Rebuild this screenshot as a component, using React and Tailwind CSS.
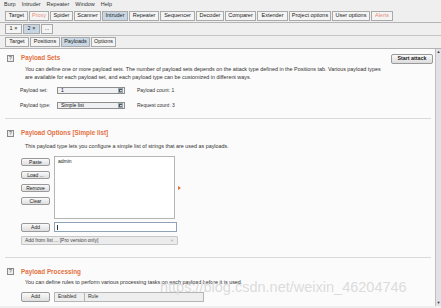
import React from 'react';

const mainTabs = [
  { label: 'Target', w: 'w-[23px]' },
  { label: 'Proxy', w: 'w-[20px]', dim: true },
  { label: 'Spider', w: 'w-[23px]' },
  { label: 'Scanner', w: 'w-[27px]' },
  { label: 'Intruder', w: 'w-[26px]', active: true },
  { label: 'Repeater', w: 'w-[30px]' },
  { label: 'Sequencer', w: 'w-[35px]' },
  { label: 'Decoder', w: 'w-[28px]' },
  { label: 'Comparer', w: 'w-[31px]' },
  { label: 'Extender', w: 'w-[31px]' },
  { label: 'Project options', w: 'w-[42px]' },
  { label: 'User options', w: 'w-[38px]' },
  { label: 'Alerts', w: 'w-[22px]', dim: true },
];

const subTabs = [
  { label: 'Target', w: 'w-[24px]' },
  { label: 'Positions', w: 'w-[30px]' },
  { label: 'Payloads', w: 'w-[29px]', active: true },
  { label: 'Options', w: 'w-[25px]' },
];

function Tab({ label, w, active, dim }) {
  return (
    <div
      className={`${w} h-[10px] shrink-0 flex items-center justify-center border border-[#a9a9a9] text-[5.5px] leading-none ${
        active ? 'bg-[#c9d7e5]' : 'bg-[#f4f4f4]'
      } ${dim ? 'text-[#e98a7a]' : 'text-[#222]'}`}
    >
      {label}
    </div>
  );
}

function Help() {
  return (
    <div className="w-[7px] h-[7px] shrink-0 border border-[#8a8a8a] bg-[#eeeeee] text-[5px] leading-none flex items-center justify-center text-[#444]">
      ?
    </div>
  );
}

function Heading({ children }) {
  return (
    <div className="flex items-center gap-[7px] pl-[7px]">
      <Help />
      <span className="text-[6.3px] font-semibold text-[#e3703d] leading-none">{children}</span>
    </div>
  );
}

function Btn({ children, className = '' }) {
  return (
    <div
      className={`w-[29px] h-[8px] rounded-[2px] border border-[#9a9a9a] bg-gradient-to-b from-[#fafafa] to-[#dedede] text-[5px] leading-none flex items-center justify-center text-[#222] ${className}`}
    >
      {children}
    </div>
  );
}

function Select({ value }) {
  return (
    <div className="w-[68px] h-[7px] border border-[#8e8e8e] bg-[#eef0f3] flex items-center justify-between">
      <span className="pl-[3px] text-[5px] leading-none text-[#111]">{value}</span>
      <span className="w-[5px] h-[5px] mr-[1px] bg-[#4d5560] border border-[#9aa] flex items-center justify-center">
        <span className="w-0 h-0 border-l-[1.5px] border-r-[1.5px] border-t-[2px] border-l-transparent border-r-transparent border-t-white" />
      </span>
    </div>
  );
}

export default function App() {
  return (
    <div className="relative w-[441px] h-[308px] overflow-hidden bg-[#efefef] font-['Liberation_Sans',sans-serif] text-[#222]">
      {/* menu */}
      <div className="h-[10px] flex items-center gap-[6px] pl-[4px] text-[5.5px] leading-none text-[#333]">
        <span>Burp</span>
        <span>Intruder</span>
        <span>Repeater</span>
        <span>Window</span>
        <span>Help</span>
      </div>

      {/* main tabs */}
      <div className="h-[13px] flex items-end gap-[1px] pl-[5px] border-b border-[#b4b4b4] pb-[1px]">
        {mainTabs.map((t) => (
          <Tab key={t.label} {...t} />
        ))}
      </div>

      {/* numbered tabs */}
      <div className="h-[13px] flex items-center gap-[1px] pl-[5px] border-b border-[#c4c4c4]">
        <Tab label="1 ×" w="w-[17px]" />
        <Tab label="2 ×" w="w-[17px]" active />
        <Tab label="..." w="w-[12px]" />
      </div>

      {/* sub tabs */}
      <div className="h-[13px] flex items-end gap-[1px] pl-[5px] pb-[1px] border-b border-[#b4b4b4]">
        {subTabs.map((t) => (
          <Tab key={t.label} {...t} />
        ))}
      </div>

      {/* content */}
      <div className="flex h-[257px]">
        <div className="flex-1 bg-[#fbfbfb] pt-[5px] pr-[2px]">
          {/* Payload sets */}
          <div className="flex items-start justify-between">
            <div className="pt-[1px]">
              <Heading>Payload Sets</Heading>
            </div>
            <div className="w-[42px] h-[10px] rounded-[2px] border border-[#9a9a9a] bg-gradient-to-b from-[#fafafa] to-[#dcdcdc] text-[5.3px] font-bold leading-none flex items-center justify-center">
              Start attack
            </div>
          </div>
          <div className="pl-[25px] pt-[1px] text-[5.4px] leading-[8px] text-[#333] w-[388px]">
            You can define one or more payload sets. The number of payload sets depends on the attack type defined in the Positions tab. Various payload types are available for each payload set, and each payload type can be customized in different ways.
          </div>
          <div className="pl-[20px] pt-[6px] flex flex-col gap-[8px] text-[5px] leading-none text-[#333]">
            <div className="flex items-center">
              <span className="w-[37px]">Payload set:</span>
              <Select value="1" />
              <span className="ml-[12px]">Payload count: 1</span>
            </div>
            <div className="flex items-center">
              <span className="w-[37px]">Payload type:</span>
              <Select value="Simple list" />
              <span className="ml-[12px]">Request count: 3</span>
            </div>
          </div>
          <div className="ml-[5px] mr-[2px] mt-[9px] border-t border-[#dadada]" />

          {/* Payload options */}
          <div className="pt-[11px]">
            <Heading>Payload Options [Simple list]</Heading>
          </div>
          <div className="pl-[25px] pt-[7px] text-[5.4px] leading-none text-[#333]">
            This payload type lets you configure a simple list of strings that are used as payloads.
          </div>
          <div className="pl-[21px] pt-[7px] flex">
            <div className="flex flex-col gap-[5px] pt-[2px]">
              <Btn>Paste</Btn>
              <Btn>Load ...</Btn>
              <Btn>Remove</Btn>
              <Btn>Clear</Btn>
            </div>
            <div className="ml-[4px] w-[121px] h-[63px] border border-[#b5b5b5] bg-white px-[3px] pt-[2px] text-[5px] leading-none text-[#222]">
              admin
            </div>
            <div className="ml-[3px] mt-[30px] w-0 h-0 border-t-[2px] border-b-[2px] border-l-[3px] border-t-transparent border-b-transparent border-l-[#e3703d]" />
          </div>
          <div className="pl-[21px] pt-[3px] flex items-center">
            <Btn className="h-[9px]">Add</Btn>
            <div className="ml-[4px] w-[123px] h-[10px] border border-[#8fa3b8] bg-white flex items-center pl-[2px]">
              <span className="w-px h-[5px] bg-[#333]" />
            </div>
          </div>
          <div className="ml-[21px] mt-[4px] w-[157px] h-[9px] rounded-[1px] border border-[#c6c6c6] bg-[#ececec] flex items-center justify-between px-[3px] text-[5px] leading-none text-[#444]">
            <span>Add from list ... [Pro version only]</span>
            <span className="text-[4px] text-[#bbb]">▼</span>
          </div>
          <div className="ml-[5px] mr-[2px] mt-[12px] border-t border-[#dadada]" />

          {/* Payload processing */}
          <div className="pt-[10px]">
            <Heading>Payload Processing</Heading>
          </div>
          <div className="pl-[25px] pt-[5px] text-[5.4px] leading-none text-[#333]">
            You can define rules to perform various processing tasks on each payload before it is used.
          </div>
          <div className="pl-[21px] pt-[6px] flex items-start">
            <Btn className="h-[10px]">Add</Btn>
            <div className="ml-[4px] w-[150px] h-[10px] border border-[#b5b5b5] bg-[#eeeeee] flex text-[5px] leading-none text-[#333]">
              <span className="w-[30px] border-r border-[#b5b5b5] pl-[3px] flex items-center">Enabled</span>
              <span className="pl-[3px] flex items-center">Rule</span>
            </div>
          </div>
        </div>

        {/* scrollbar */}
        <div className="w-[6px] bg-[#dfe3e8] border-l border-[#c0c0c0] flex flex-col justify-between items-center py-[1px] text-[4px] leading-none text-[#333]">
          <span>▲</span>
          <span>▼</span>
        </div>
      </div>

      {/* watermark */}
      <div className="absolute left-[160px] top-[280px] text-[14.5px] leading-none text-[#dcdcdc] whitespace-nowrap">
        https://blog.csdn.net/weixin_46204746
      </div>
    </div>
  );
}
